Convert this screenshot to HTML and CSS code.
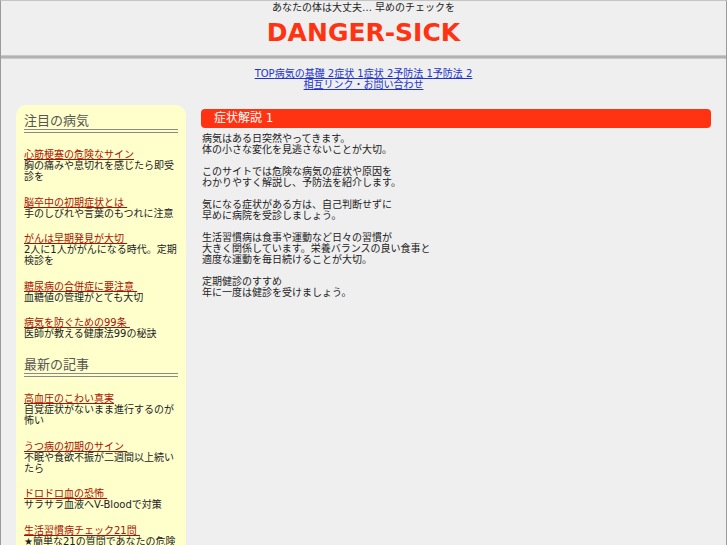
FILE: index.html
```html
<!DOCTYPE html>
<html lang="ja">
<head>
<meta charset="utf-8">
<title>DANGER-SICK</title>
<link rel="stylesheet" href="styles.css">
</head>
<body>
<div class="page">
  <header class="masthead">
    <p class="tagline">あなたの体は大丈夫… 早めのチェックを</p>
    <h1 class="logo">DANGER-SICK</h1>
  </header>
  <div class="rule"></div>
  <nav class="gnav">
    <div class="gnav-row"><a href="#">TOP</a><a href="#">病気の基礎 2</a><a href="#">症状 1</a><a href="#">症状 2</a><a href="#">予防法 1</a><a href="#">予防法 2</a></div>
    <div class="gnav-row"><a href="#">相互リンク・お問い合わせ</a></div>
  </nav>
  <div class="layout">
    <aside class="side">
      <h2 class="side-title">注目の病気</h2>
      <ul class="side-list">
        <li><a href="#">心筋梗塞の危険なサイン</a><p>胸の痛みや息切れを感じたら即受診を</p></li>
        <li><a href="#">脳卒中の初期症状とは&nbsp;</a><p>手のしびれや言葉のもつれに注意</p></li>
        <li><a href="#">がんは早期発見が大切&nbsp;</a><p>2人に1人ががんになる時代。定期検診を</p></li>
        <li><a href="#">糖尿病の合併症に要注意&nbsp;</a><p>血糖値の管理がとても大切</p></li>
        <li><a href="#">病気を防ぐための99条&nbsp;</a><p>医師が教える健康法99の秘訣</p></li>
      </ul>
      <h2 class="side-title">最新の記事</h2>
      <ul class="side-list">
        <li><a href="#">高血圧のこわい真実</a><p>自覚症状がないまま進行するのが怖い</p></li>
        <li><a href="#">うつ病の初期のサイン&nbsp;</a><p>不眠や食欲不振が二週間以上続いたら</p></li>
        <li><a href="#">ドロドロ血の恐怖&nbsp;</a><p>サラサラ血液へV-Bloodで対策</p></li>
        <li><a href="#">生活習慣病チェック21問&nbsp;</a><p>★簡単な21の質問であなたの危険度を判定します</p></li>
      </ul>
    </aside>
    <main class="content">
      <h2 class="content-title">症状解説 1</h2>
      <p>病気はある日突然やってきます。<br>体の小さな変化を見逃さないことが大切。</p>
      <p>このサイトでは危険な病気の症状や原因を<br>わかりやすく解説し、予防法を紹介します。</p>
      <p>気になる症状がある方は、自己判断せずに<br>早めに病院を受診しましょう。</p>
      <p>生活習慣病は食事や運動など日々の習慣が<br>大きく関係しています。栄養バランスの良い食事と<br>適度な運動を毎日続けることが大切。</p>
      <p>定期健診のすすめ<br>年に一度は健診を受けましょう。</p>
    </main>
  </div>
</div>
</body>
</html>
```
FILE: styles.css
```css
html, body {
  margin: 0;
  padding: 0;
}
body {
  background: #efefef;
  font-family: "DejaVu Sans", "Noto Sans CJK JP", sans-serif;
  font-size: 10px;
  line-height: 11px;
  color: #222;
}
.page {
  border-left: 1px solid #9a9a9a;
  border-right: 1px solid #9a9a9a;
  border-top: 1px solid #c4c4c4;
  min-height: 545px;
  box-sizing: border-box;
  overflow: hidden;
}
.masthead {
  text-align: center;
  padding-top: 1px;
  padding-bottom: 7px;
}
.tagline {
  margin: 0;
  font-size: 10px;
  line-height: 12px;
  color: #222;
}
.logo {
  margin: 4px 0 0;
  font-size: 25px;
  line-height: 30px;
  font-weight: bold;
  color: #ff3311;
}
.rule {
  height: 4px;
  background: linear-gradient(#d2d2d2, #a8a8a8 50%, #d6d6d6);
}
.gnav {
  padding-top: 8.5px;
  text-align: center;
}
.gnav-row {
  line-height: 11px;
}
.gnav a {
  color: #2233cc;
  text-decoration: underline;
}
.layout {
  display: flex;
  align-items: flex-start;
  gap: 15px;
  padding: 0 15px;
  margin-top: 15px;
}
.side {
  width: 170px;
  flex: none;
  box-sizing: border-box;
  background: #ffffcc;
  border-radius: 10px 10px 0 0;
  padding: 8.5px 8px 40px;
}
.side-title {
  margin: 0;
  font-size: 13px;
  line-height: 15px;
  font-weight: normal;
  color: #555;
  padding-bottom: 0.5px;
  border-bottom: 4px double #8a8a8a;
}
.side-list {
  list-style: none;
  margin: 16.5px 0 18px;
  padding: 0;
}
.side-list li {
  margin-bottom: 14.5px;
}
.side-list li:last-child {
  margin-bottom: 0;
}
.side-list a {
  color: #aa1100;
  text-decoration: underline;
}
.side-list p {
  margin: 0;
  color: #222;
}
.content {
  flex: 1;
  padding-top: 4px;
}
.content-title {
  margin: 0 0 5.5px;
  background: #ff3311;
  color: #fff;
  border-radius: 4px;
  font-size: 12px;
  line-height: 19px;
  font-weight: normal;
  padding-left: 13px;
}
.content p {
  margin: 0 0 11px 1px;
}
```
